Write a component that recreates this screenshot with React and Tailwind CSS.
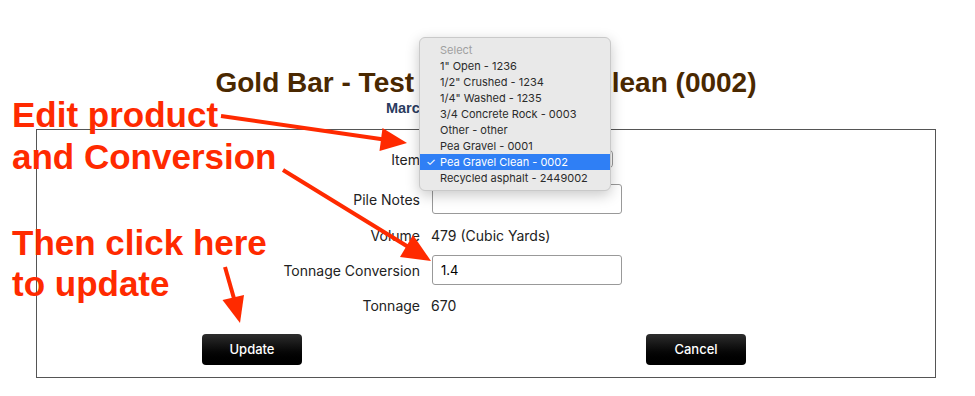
const options = [
  "1\" Open - 1236",
  "1/2\" Crushed - 1234",
  "1/4\" Washed - 1235",
  "3/4 Concrete Rock - 0003",
  "Other - other",
  "Pea Gravel - 0001",
  "Pea Gravel Clean - 0002",
  "Recycled asphalt - 2449002",
];

const Row = ({ label, children, className = "" }) => (
  <div className={`grid grid-cols-[383px_1fr] gap-x-[12px] items-center h-[30px] ${className}`}>
    <div className="text-right text-[14px] text-[#222]">{label}</div>
    <div className="flex items-center">{children}</div>
  </div>
);

const Arrows = () => (
  <svg className="absolute inset-0 pointer-events-none" width="975" height="396">
    <g fill="#ff2a00" stroke="#ff2a00">
      <line x1="221" y1="116" x2="384" y2="139.5" strokeWidth="4" />
      <polygon points="407,143 379.5,151 382.5,128" stroke="none" />
      <line x1="283" y1="170" x2="410" y2="248" strokeWidth="4" />
      <polygon points="431,261 400,257 413,235" stroke="none" />
      <line x1="225" y1="267" x2="235" y2="302" strokeWidth="4" />
      <polygon points="240,323 222.5,300 244,295" stroke="none" />
    </g>
  </svg>
);

export default function App() {
  return (
    <div className="relative w-[975px] h-[396px] bg-white overflow-hidden font-[Inter,sans-serif]">
      <div className="pt-[67px] w-[900px] ml-[36px]">
        <h1 className="text-center font-['Liberation_Sans',Arial,sans-serif] font-bold text-[28px] leading-[32px] text-[#4a2800]">
          Gold Bar - Test - Pea Gravel Clean (0002)
        </h1>
        <p className="mt-[1px] text-center font-['Liberation_Sans',Arial,sans-serif] font-bold text-[14.5px] leading-[16px] text-[#2a3c5f]">
          March 24, 2021 - 10:41:37 AM
        </p>

        <div className="mt-[13px] border border-[#555] pt-[14px] pb-[12px]">
          <Row label="Item" className="h-[28px]">
            <div className="w-[181px] h-[20px] border border-[#999] rounded-[5px]" />
          </Row>
          <Row label="Pile Notes" className="mt-[10px]">
            <input className="w-[190px] h-[30px] border border-[#999] rounded-[3px] outline-none px-[8px] text-[13px]" />
          </Row>
          <Row label="Volume" className="mt-[6px]">
            <span className="text-[14px] text-[#222] -ml-[1px]">479 (Cubic Yards)</span>
          </Row>
          <Row label="Tonnage Conversion" className="mt-[5px]">
            <input
              defaultValue="1.4"
              className="w-[190px] h-[30px] border border-[#999] rounded-[3px] outline-none px-[8px] text-[13px] text-black"
            />
          </Row>
          <Row label="Tonnage" className="mt-[5px]">
            <span className="text-[14px] text-[#222] -ml-[1px]">670</span>
          </Row>

          <div className="mt-[14px] flex justify-between pl-[165px] pr-[189px]">
            <button className="w-[100px] h-[31px] rounded-[4px] bg-gradient-to-b from-[#2e2e2e] to-[#000] text-white text-[13px] font-medium">
              Update
            </button>
            <button className="w-[100px] h-[31px] rounded-[4px] bg-gradient-to-b from-[#2e2e2e] to-[#000] text-white text-[13px] font-medium">
              Cancel
            </button>
          </div>
        </div>
      </div>

      {/* annotations */}
      <div className="absolute left-[12px] top-[94px] font-['Liberation_Sans',Arial,sans-serif] font-bold text-[35px] leading-[42px] text-[#ff2a00]">
        <div>Edit product</div>
        <div>and Conversion</div>
      </div>
      <div className="absolute left-[12px] top-[222px] font-['Liberation_Sans',Arial,sans-serif] font-bold text-[35px] leading-[41px] text-[#ff2a00]">
        <div>Then click here</div>
        <div>to update</div>
      </div>
      <Arrows />

      {/* open select menu */}
      <div className="absolute left-[419px] top-[37px] w-[192px] py-[4px] bg-[#e9e9e9] border border-[#c9c9c9] rounded-[6px] shadow-[0_4px_14px_rgba(0,0,0,0.22)] text-[11px] text-[#2b2b2b]">
        <div className="h-[16px] leading-[16px] pl-[20px] text-[#a0a0a0]">Select</div>
        {options.map((o) => {
          const sel = o === "Pea Gravel Clean - 0002";
          return (
            <div
              key={o}
              className={`relative h-[16px] leading-[16px] pl-[20px] ${sel ? "bg-[#2f7ff5] text-white" : ""}`}
            >
              {sel && <span className="absolute left-[6px] top-0 text-[11px]">✓</span>}
              {o}
            </div>
          );
        })}
      </div>
    </div>
  );
}
